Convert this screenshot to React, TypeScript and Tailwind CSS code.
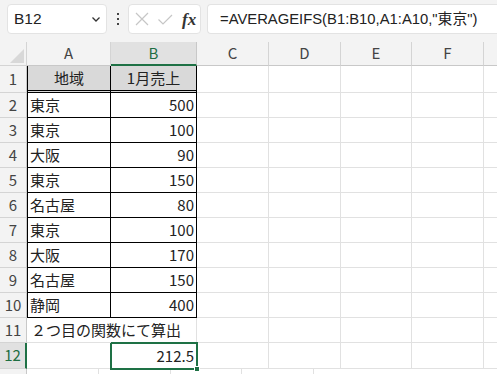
import React from "react";

const cols = [
  { k: "A", w: "w-[84px]" },
  { k: "B", w: "w-[86px]" },
  { k: "C", w: "w-[72px]" },
  { k: "D", w: "w-[72px]" },
  { k: "E", w: "w-[71px]" },
  { k: "F", w: "w-[72px]" },
];

const data: [string, string][] = [
  ["地域", "1月売上"],
  ["東京", "500"],
  ["東京", "100"],
  ["大阪", "90"],
  ["東京", "150"],
  ["名古屋", "80"],
  ["東京", "100"],
  ["大阪", "170"],
  ["名古屋", "150"],
  ["静岡", "400"],
];

const cellFont = { fontFamily: '"Noto Sans CJK JP", "Liberation Sans", sans-serif' };

function RowHeader({ n, h, selected }: { n?: number; h: string; selected?: boolean }) {
  return (
    <div
      className={`w-[27px] shrink-0 ${h} flex items-center justify-center text-[15px] border-b border-[#d4d4d4] ${
        selected
          ? "bg-[#e1e1e1] text-[#1e6e42] border-r-2 border-r-[#1e7145]"
          : "bg-[#f3f3f3] text-[#444] border-r border-r-[#c8c8c8]"
      }`}
      style={cellFont}
    >
      {n}
    </div>
  );
}

function EmptyCells({ h }: { h: string }) {
  return (
    <>
      {cols.slice(2).map((c) => (
        <div key={c.k} className={`${c.w} shrink-0 ${h} border-r border-b border-[#e1e1e1]`} />
      ))}
      <div className={`flex-1 ${h} border-b border-[#e1e1e1]`} />
    </>
  );
}

export default function App() {
  return (
    <div className="w-[497px] h-[374px] overflow-hidden bg-white relative" style={{ fontFamily: '"Liberation Sans", "Noto Sans CJK JP", sans-serif' }}>
      {/* formula bar */}
      <div className="h-[42px] bg-[#f3f3f3] flex items-start pt-[4px] pl-[7px]">
        <div className="w-[100px] h-[30px] bg-white rounded-[4px] border border-[#e3e3e3] flex items-center justify-between pl-[6px] pr-[4px]">
          <span className="text-[15.5px] text-[#222]">B12</span>
          <svg width="12" height="12" viewBox="0 0 12 12" fill="none" stroke="#333" strokeWidth="1.3">
            <path d="M2.5 4.5 L6 8 L9.5 4.5" />
          </svg>
        </div>
        <div className="w-[21px] h-[30px] flex items-center justify-center">
          <svg width="4" height="14" viewBox="0 0 4 14" fill="#444">
            <rect x="1" y="1" width="2" height="2" />
            <rect x="1" y="6" width="2" height="2" />
            <rect x="1" y="11" width="2" height="2" />
          </svg>
        </div>
        <div className="w-[73px] h-[30px] bg-white rounded-[4px] border border-[#e3e3e3] flex items-center pl-[5px]">
          <svg width="16" height="16" viewBox="0 0 16 16" fill="none" stroke="#c6c6c6" strokeWidth="1.2">
            <path d="M2 2 L14 14 M14 2 L2 14" />
          </svg>
          <svg className="ml-[7px]" width="16" height="16" viewBox="0 0 16 16" fill="none" stroke="#c6c6c6" strokeWidth="1.2">
            <path d="M1.5 8.5 L6 13 L15 4" />
          </svg>
          <span
            className="ml-[9px] text-[17px] italic font-bold text-[#333] leading-none"
            style={{ fontFamily: '"Liberation Serif", "DejaVu Serif", serif' }}
          >
            fx
          </span>
        </div>
        <div className="ml-[6px] flex-1 h-[30px] bg-white rounded-l-[4px] border border-r-0 border-[#e3e3e3] flex items-center pl-[12px] whitespace-nowrap">
          <span className="text-[14.8px] text-[#222]" style={{ fontFamily: '"Liberation Sans", "Noto Sans CJK JP", sans-serif' }}>
            =AVERAGEIFS(B1:B10,A1:A10,"東京")
          </span>
        </div>
      </div>

      {/* column headers */}
      <div className="flex h-[24px]" style={cellFont}>
        <div className="w-[27px] shrink-0 h-[24px] bg-[#f3f3f3] border-r border-b border-[#d4d4d4] relative">
          <svg className="absolute right-[2px] bottom-[2px]" width="14" height="14" viewBox="0 0 14 14">
            <path d="M14 0 L14 14 L0 14 Z" fill="#d8d8d8" />
          </svg>
        </div>
        {cols.map((c) => (
          <div
            key={c.k}
            className={`${c.w} shrink-0 h-[24px] flex items-center justify-center text-[15px] border-r ${
              c.k === "B"
                ? "bg-[#e1e1e1] text-[#1e6e42] border-r-[#c8c8c8] border-b-2 border-b-[#1e7145]"
                : "bg-[#f3f3f3] text-[#444] border-[#d4d4d4] border-b border-b-[#c8c8c8]"
            }`}
          >
            {c.k}
          </div>
        ))}
        <div className="flex-1 h-[24px] bg-[#f3f3f3] border-b border-[#c8c8c8]" />
      </div>

      {/* data rows */}
      <div className="text-[15px] text-[#222]" style={cellFont}>
        {data.map(([a, b], i) => {
          const isHead = i === 0;
          const h = isHead ? "h-[27px]" : "h-[25px]";
          return (
            <div key={i} className="flex">
              <RowHeader n={i + 1} h={h} />
              <div
                className={`w-[84px] shrink-0 ${h} flex items-center border-l border-r border-black ${
                  isHead
                    ? "bg-[#d9d9d9] justify-center border-double border-b-[3px]"
                    : "bg-white justify-start pl-[2px] border-b"
                }`}
              >
                {a}
              </div>
              <div
                className={`w-[86px] shrink-0 ${h} flex items-center border-r border-black ${
                  isHead
                    ? "bg-[#d9d9d9] justify-center border-double border-b-[3px]"
                    : "bg-white justify-end pr-[2px] border-b"
                }`}
              >
                {b}
              </div>
              <EmptyCells h={h} />
            </div>
          );
        })}

        {/* row 11 */}
        <div className="flex">
          <RowHeader n={11} h="h-[25px]" />
          <div className="w-[84px] shrink-0 h-[25px] flex items-center pl-[4px] border-b border-[#e1e1e1] whitespace-nowrap overflow-visible relative z-10">
            ２つ目の関数にて算出
          </div>
          <div className="w-[86px] shrink-0 h-[25px] border-r border-b border-[#e1e1e1]" />
          <EmptyCells h="h-[25px]" />
        </div>

        {/* row 12 */}
        <div className="flex">
          <RowHeader n={12} h="h-[26px]" selected />
          <div className="w-[84px] shrink-0 h-[26px] border-r border-b border-[#e1e1e1]" />
          <div className="w-[86px] shrink-0 h-[26px] flex items-center justify-end pr-[3px] relative">
            212.5
            <div className="absolute left-[-1px] top-[-1px] right-[-1px] bottom-[-1px] border-2 border-[#1e7145]" />
            <div className="absolute right-[-3px] bottom-[-3px] w-[6px] h-[6px] bg-[#1e7145] border border-white" />
          </div>
          <EmptyCells h="h-[26px]" />
        </div>
        <div className="flex">
          <RowHeader h="h-[25px]" />
          <EmptyCells h="h-[25px]" />
        </div>
      </div>
    </div>
  );
}
